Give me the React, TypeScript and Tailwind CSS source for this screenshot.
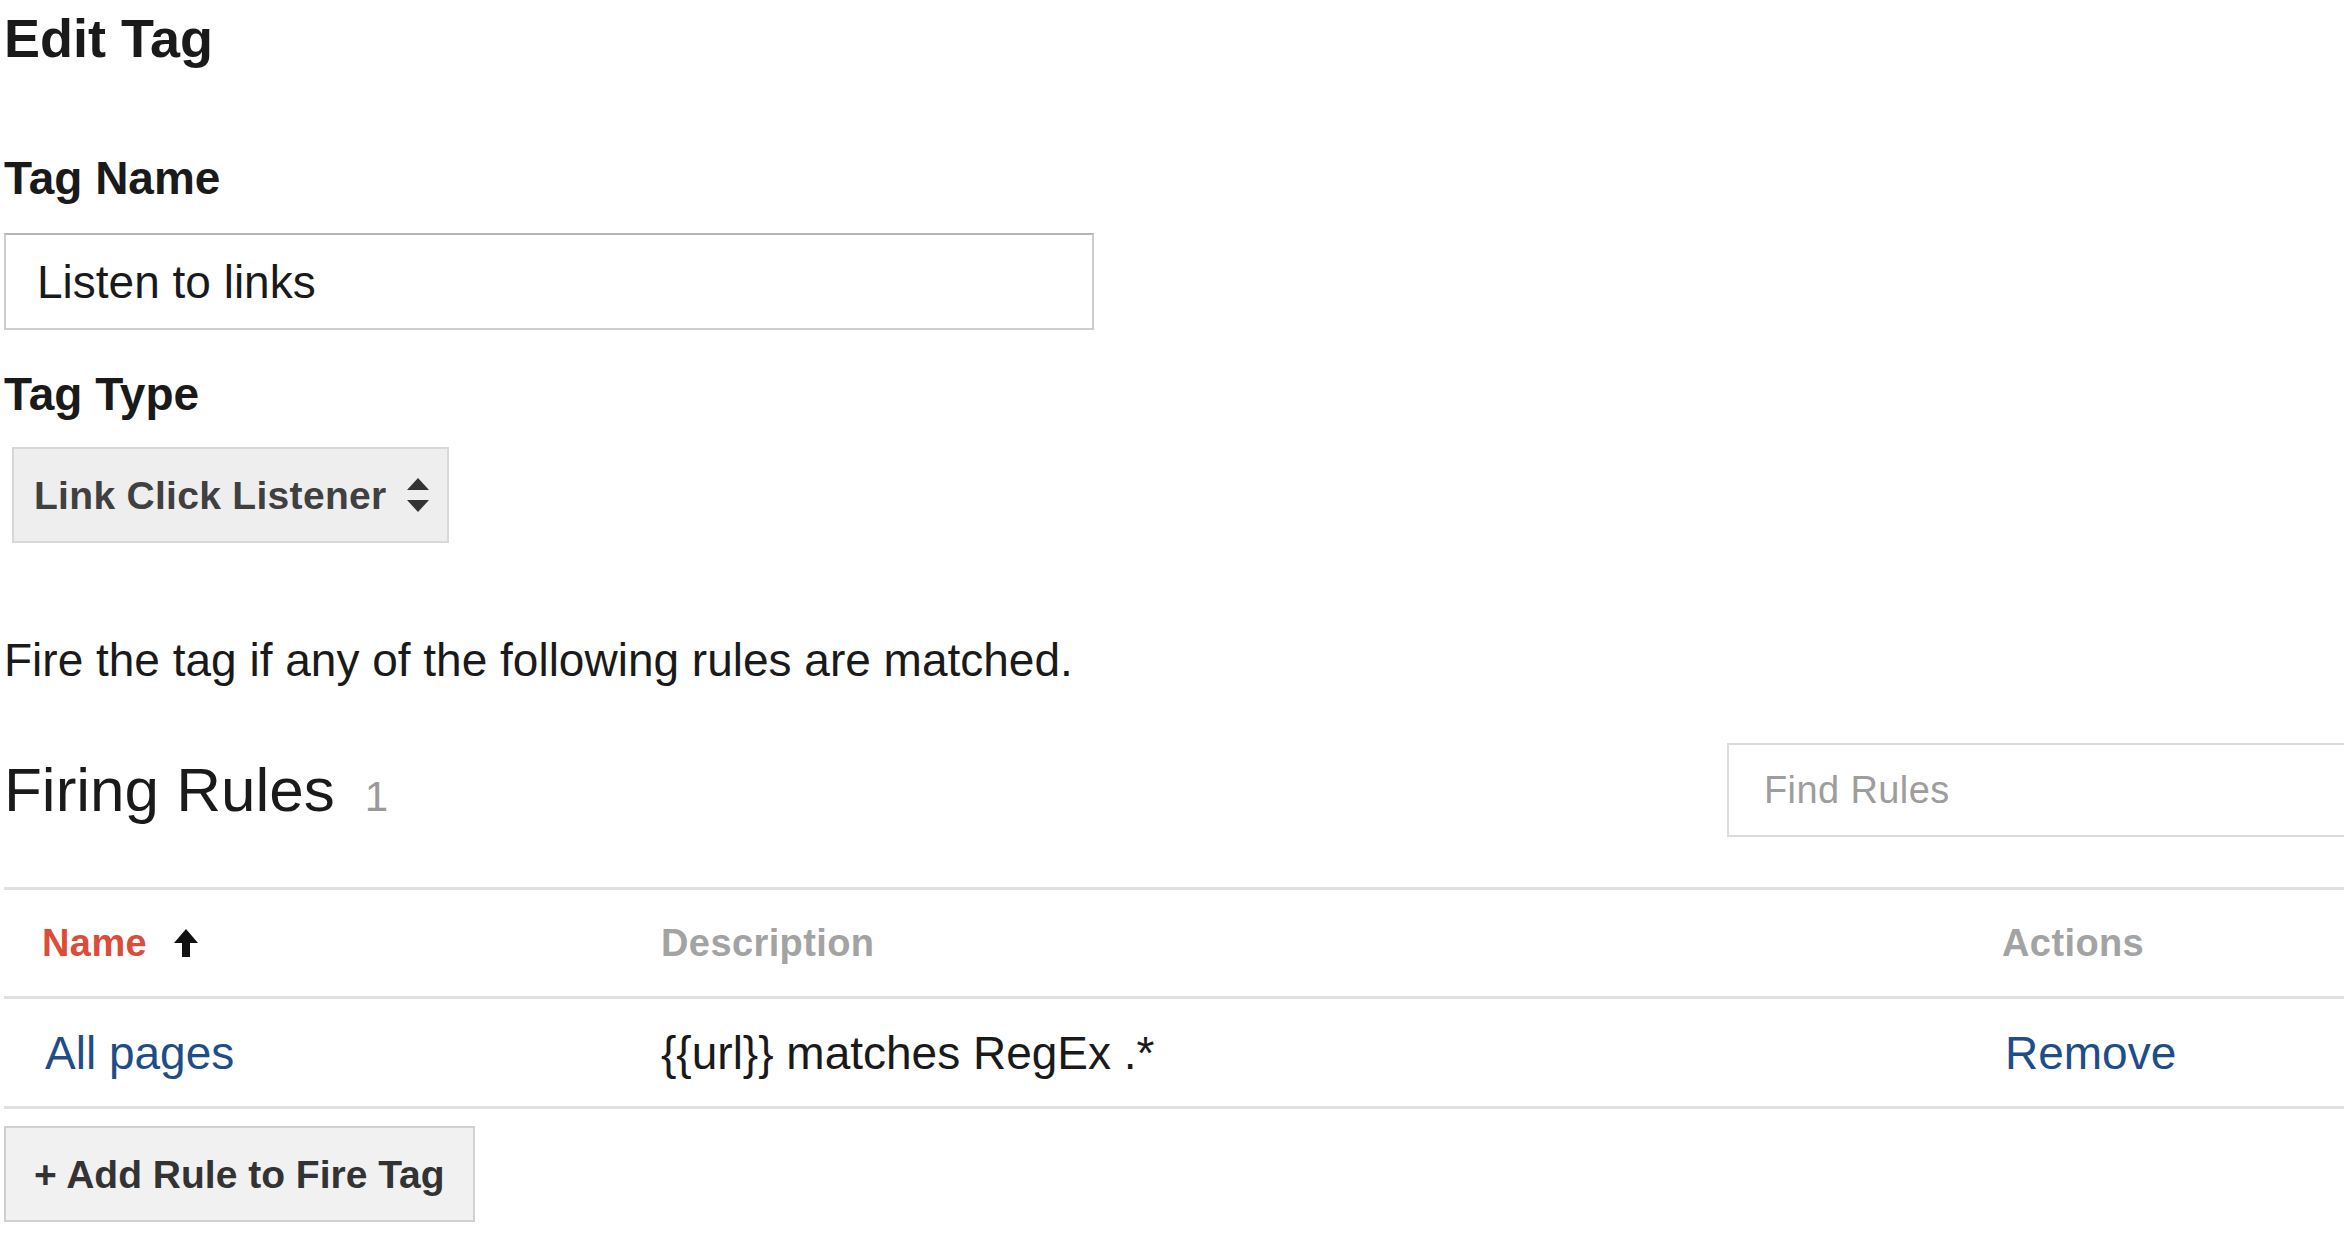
const SelectArrows = () => (
  <svg width="24" height="36" viewBox="0 0 24 36" className="shrink-0">
    <polygon points="12,1 23,13 1,13" fill="#333" />
    <polygon points="1,23 23,23 12,35" fill="#333" />
  </svg>
);

const SortUp = () => (
  <svg width="24" height="28" viewBox="0 0 24 28" className="shrink-0">
    <polygon points="12,0 24,14 0,14" fill="#111" />
    <rect x="8" y="13" width="8" height="15" fill="#111" />
  </svg>
);

const App = () => {
  return (
    <div className="min-h-screen overflow-hidden bg-white pl-[4px] font-['Liberation_Sans',Arial,sans-serif] text-[#1a1a1a]">
      <h1 className="pt-[11px] text-[54px] leading-none font-bold">Edit Tag</h1>

      {/* Tag name */}
      <h2 className="mt-[90px] text-[46px] leading-none font-bold">Tag Name</h2>
      <div className="mt-[32px] flex h-[97px] w-[1090px] items-center border-2 border-[#cdcdcd] border-t-[#b5b5b5] pl-[31px] text-[46px] leading-none">
        Listen to links
      </div>

      {/* Tag type */}
      <h2 className="mt-[41px] text-[46px] leading-none font-bold">Tag Type</h2>
      <div className="mt-[30px] ml-[8px] flex h-[96px] w-[437px] items-center border-2 border-[#d8d8d8] bg-[#eeeeee] pl-[20px] pr-[17px]">
        <span className="text-[39px] leading-none font-bold tracking-[0.3px] text-[#404040]">
          Link Click Listener
        </span>
        <span className="ml-auto">
          <SelectArrows />
        </span>
      </div>

      <p className="mt-[94px] text-[46px] leading-none">
        Fire the tag if any of the following rules are matched.
      </p>

      {/* Firing rules header */}
      <div className="mt-[60px] flex h-[94px] items-center">
        <div className="flex items-baseline">
          <span className="text-[62px] leading-none">Firing Rules</span>
          <span className="ml-[30px] text-[42px] leading-none text-[#9a9a9a]">1</span>
        </div>
        <div className="ml-auto flex h-[94px] w-[617px] items-center border-2 border-r-0 border-[#dcdcdc] pl-[35px] text-[38px] leading-none tracking-[0.4px] text-[#9d9d9d]">
          Find Rules
        </div>
      </div>

      {/* Rules table */}
      <div className="mt-[50px] border-t-[3px] border-[#e0e0e0]">
        <div className="grid h-[109px] grid-cols-[657px_1fr_342px] items-center border-b-[3px] border-[#e0e0e0] text-[38px] leading-none font-bold tracking-[0.4px] text-[#a3a3a3]">
          <div className="flex items-center gap-[27px] pl-[38px]">
            <span className="text-[#dd4b39]">Name</span>
            <SortUp />
          </div>
          <div>Description</div>
          <div>Actions</div>
        </div>
        <div className="grid h-[110px] grid-cols-[657px_1fr_342px] items-center border-b-[3px] border-[#e0e0e0] text-[46px] leading-none">
          <div className="pl-[41px] text-[#1f4d87]">All pages</div>
          <div>{"{{url}} matches RegEx .*"}</div>
          <div className="pl-[3px] text-[#1f4d87]">Remove</div>
        </div>
      </div>

      <button className="mt-[17px] flex h-[96px] w-[471px] items-center border-2 border-[#d0d0d0] bg-[#f1f1f1] pl-[28px] text-[39px] leading-none font-bold text-[#333]">
        + Add Rule to Fire Tag
      </button>
    </div>
  );
};

export default App;
